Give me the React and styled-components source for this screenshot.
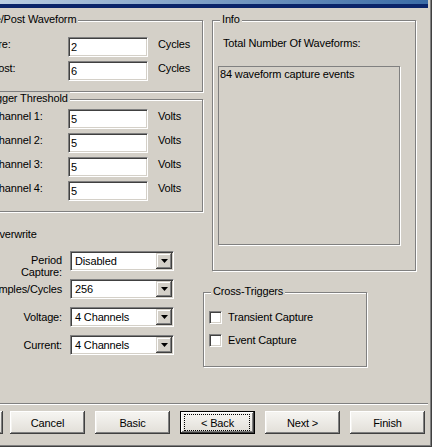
import React from 'react';
import styled, { createGlobalStyle } from 'styled-components';

const Global = createGlobalStyle`
  html, body { margin: 0; padding: 0; background: #d4d0c8; }
  body {
    font-family: "Liberation Sans", Arial, sans-serif;
    font-size: 11px;
    color: #000;
    letter-spacing: -0.15px;
  }
  * { box-sizing: border-box; }
`;

const Window = styled.div`
  width: 432px;
  height: 447px;
  overflow: hidden;
  background: #d4d0c8;
  border-right: 1px solid #404040;
  border-bottom: 1px solid #404040;
  box-shadow: inset -1px -1px 0 #808080;
  display: flex;
  flex-direction: column;
`;

const TitleBar = styled.div`
  flex: none;
  height: 8px;
  margin-right: 3px;
  background: linear-gradient(to right, #bacde2, #3a6ba6);
  border-bottom: 4px solid #0a246a;
`;

const Main = styled.div`
  flex: 1;
  display: flex;
  align-items: flex-start;
  padding-top: 12px;
`;

const LeftCol = styled.div`
  flex: none;
  width: 229px;
  margin-left: -26px;
  display: flex;
  flex-direction: column;
`;

const RightCol = styled.div`
  flex: none;
  display: flex;
  flex-direction: column;
  align-items: flex-start;
`;

const Group = styled.div`
  position: relative;
  width: ${p => (p.$w ? `${p.$w}px` : 'auto')};
  height: ${p => (p.$h ? `${p.$h}px` : 'auto')};
  margin-top: ${p => p.$mt || 0}px;
  margin-left: ${p => p.$ml || 0}px;
  padding: ${p => p.$pad};
  border: 1px solid #808080;
  box-shadow: inset 1px 1px 0 #fff, 1px 1px 0 #fff;
`;

const Legend = styled.span`
  position: absolute;
  top: -8px;
  left: 7px;
  padding: 0 2px;
  line-height: 13px;
  background: #d4d0c8;
  white-space: nowrap;
`;

const FieldGrid = styled.div`
  display: grid;
  grid-template-columns: 67px 80px auto;
  grid-auto-rows: 20px;
  column-gap: 10px;
  row-gap: 4px;
  align-items: start;
`;

const Label = styled.span`
  line-height: 13px;
  padding-top: 1px;
  white-space: nowrap;
`;

const Edit = styled.input`
  width: 80px;
  height: 20px;
  margin: 0;
  padding: 0 2px;
  font: inherit;
  letter-spacing: inherit;
  color: #000;
  background: #fff;
  border: 1px solid;
  border-color: #808080 #fff #fff #808080;
  box-shadow: inset 1px 1px 0 #404040, inset -1px -1px 0 #d4d0c8;
  outline: none;
`;

const Plain = styled.div`
  margin: 16px 0 0 17px;
  line-height: 13px;
`;

const ComboGrid = styled.div`
  margin-top: 10px;
  display: grid;
  grid-template-columns: 88px 104px;
  grid-auto-rows: 20px;
  column-gap: 8px;
  row-gap: 8px;
  align-items: start;
`;

const ComboLabel = styled.span`
  text-align: right;
  white-space: nowrap;
  line-height: ${p => (p.$stack ? '12px' : '20px')};
  padding-top: ${p => (p.$stack ? 3 : 0)}px;
`;

const Combo = styled.div`
  width: 104px;
  height: 20px;
  display: flex;
  align-items: center;
  background: #fff;
  border: 1px solid;
  border-color: #808080 #fff #fff #808080;
  box-shadow: inset 1px 1px 0 #404040, inset -1px -1px 0 #d4d0c8;
  padding: 1px;
`;

const ComboText = styled.span`
  flex: 1;
  padding-left: 3px;
  line-height: 16px;
  white-space: nowrap;
`;

const ArrowBtn = styled.span`
  flex: none;
  width: 16px;
  height: 16px;
  display: flex;
  align-items: center;
  justify-content: center;
  background: #d4d0c8;
  box-shadow: inset -1px -1px 0 #404040, inset 1px 1px 0 #d4d0c8,
    inset -2px -2px 0 #808080, inset 2px 2px 0 #fff;
`;

const Caption = styled.div`
  margin-left: 5px;
  line-height: 13px;
  white-space: nowrap;
`;

const InfoBox = styled.div`
  margin-top: 16px;
  width: 182px;
  height: 179px;
  padding: 1px 1px;
  line-height: 13px;
  border: 1px solid #808080;
  box-shadow: 1px 1px 0 #fff;
  white-space: nowrap;
`;

const CheckList = styled.div`
  display: flex;
  flex-direction: column;
  gap: 10px;
`;

const CheckRow = styled.label`
  display: flex;
  align-items: center;
  gap: 6px;
  line-height: 13px;
`;

const CheckBox = styled.span`
  flex: none;
  width: 13px;
  height: 13px;
  background: #fff;
  border: 1px solid;
  border-color: #808080 #fff #fff #808080;
  box-shadow: inset 1px 1px 0 #404040, inset -1px -1px 0 #d4d0c8;
`;

const Footer = styled.div`
  flex: none;
  padding-bottom: 12px;
`;

const Separator = styled.div`
  height: 2px;
  margin-right: 3px;
  border-top: 1px solid #808080;
  border-bottom: 1px solid #fff;
`;

const ButtonRow = styled.div`
  display: flex;
  gap: 10px;
  margin: 6px 0 0 -72px;
`;

const Button = styled.button`
  position: relative;
  flex: none;
  width: 75px;
  height: 23px;
  margin: 0 ${p => (p.$tight ? -3 : 0)}px 0 0;
  padding: 0;
  font: inherit;
  letter-spacing: inherit;
  color: #000;
  background: linear-gradient(#f7f6f3, #e1ded7);
  border: ${p => (p.$default ? '1px solid #000' : 'none')};
  box-shadow: inset -1px -1px 0 #404040, inset 1px 1px 0 #fff,
    inset -2px -2px 0 #808080, inset 2px 2px 0 #f4f3ef;
`;

const FocusRing = styled.span`
  position: absolute;
  top: 2px;
  bottom: 2px;
  left: 3px;
  right: 4px;
  border: 1px dotted #000;
`;

const Arrow = () => (
  <svg width="7" height="4" viewBox="0 0 7 4">
    <path d="M0 0h7L3.5 4z" fill="#000" />
  </svg>
);

const ComboField = ({ value }) => (
  <Combo>
    <ComboText>{value}</ComboText>
    <ArrowBtn>
      <Arrow />
    </ArrowBtn>
  </Combo>
);

const Check = ({ label }) => (
  <CheckRow>
    <CheckBox />
    {label}
  </CheckRow>
);

export default function App() {
  const channels = [1, 2, 3, 4];
  return (
    <>
      <Global />
      <Window>
        <TitleBar />
        <Main>
          <LeftCol>
            <Group $pad="16px 10px 10px 16px">
              <Legend>Pre/Post Waveform</Legend>
              <FieldGrid>
                <Label>Pre:</Label>
                <Edit defaultValue="2" readOnly />
                <Label>Cycles</Label>
                <Label>Post:</Label>
                <Edit defaultValue="6" readOnly />
                <Label>Cycles</Label>
              </FieldGrid>
            </Group>
            <Group $mt={7} $pad="9px 10px 10px 16px">
              <Legend>Trigger Threshold</Legend>
              <FieldGrid>
                {channels.map(n => (
                  <React.Fragment key={n}>
                    <Label>Channel {n}:</Label>
                    <Edit defaultValue="5" readOnly />
                    <Label>Volts</Label>
                  </React.Fragment>
                ))}
              </FieldGrid>
            </Group>
            <Plain>Overwrite</Plain>
            <ComboGrid>
              <ComboLabel $stack>
                Period
                <br />
                Capture:
              </ComboLabel>
              <ComboField value="Disabled" />
              <ComboLabel>Samples/Cycles</ComboLabel>
              <ComboField value="256" />
              <ComboLabel>Voltage:</ComboLabel>
              <ComboField value="4 Channels" />
              <ComboLabel>Current:</ComboLabel>
              <ComboField value="4 Channels" />
            </ComboGrid>
          </LeftCol>
          <RightCol>
            <Group $ml={9} $w={204} $h={251} $pad="16px 5px 5px 5px">
              <Legend>Info</Legend>
              <Caption>Total Number Of Waveforms:</Caption>
              <InfoBox>84 waveform capture events</InfoBox>
            </Group>
            <Group $mt={21} $w={164} $h={75} $pad="18px 5px 5px 5px">
              <Legend>Cross-Triggers</Legend>
              <CheckList>
                <Check label="Transient Capture" />
                <Check label="Event Capture" />
              </CheckList>
            </Group>
          </RightCol>
        </Main>
        <Footer>
          <Separator />
          <ButtonRow>
            <Button $tight>Help</Button>
            <Button>Cancel</Button>
            <Button>Basic</Button>
            <Button $default>
              <FocusRing />
              &lt; Back
            </Button>
            <Button>Next &gt;</Button>
            <Button>Finish</Button>
          </ButtonRow>
        </Footer>
      </Window>
    </>
  );
}
